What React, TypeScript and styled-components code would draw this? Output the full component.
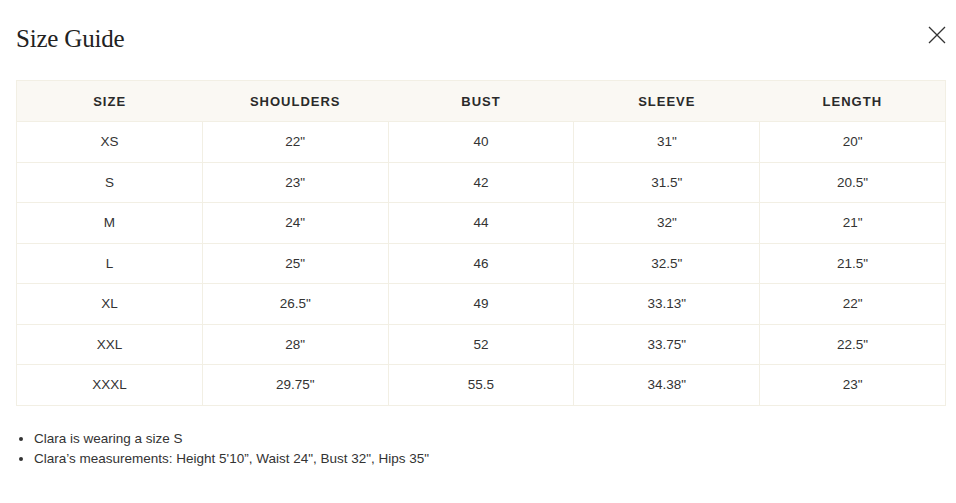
import React from 'react';
import styled, { createGlobalStyle } from 'styled-components';

const GlobalStyle = createGlobalStyle`
  body {
    margin: 0;
    background: #ffffff;
    font-family: "Liberation Sans", Arial, sans-serif;
    color: #333333;
  }
`;

const rows = [
  ['XS', '22"', '40', '31"', '20"'],
  ['S', '23"', '42', '31.5"', '20.5"'],
  ['M', '24"', '44', '32"', '21"'],
  ['L', '25"', '46', '32.5"', '21.5"'],
  ['XL', '26.5"', '49', '33.13"', '22"'],
  ['XXL', '28"', '52', '33.75"', '22.5"'],
  ['XXXL', '29.75"', '55.5', '34.38"', '23"'],
];

const headers = ['SIZE', 'SHOULDERS', 'BUST', 'SLEEVE', 'LENGTH'];

const App = () => {
  return (
    <>
      <GlobalStyle />
      <Modal>
        <Header>
          <Title>Size Guide</Title>
          <CloseButton aria-label="Close">
            <svg width="18" height="18" viewBox="0 0 18 18">
              <path d="M1 1L17 17M17 1L1 17" stroke="#333" strokeWidth="1.3" fill="none" />
            </svg>
          </CloseButton>
        </Header>
        <Table>
          <thead>
            <tr>
              {headers.map((h) => (
                <Th key={h}>{h}</Th>
              ))}
            </tr>
          </thead>
          <tbody>
            {rows.map((r) => (
              <tr key={r[0]}>
                {r.map((c, i) => (
                  <Td key={i}>{c}</Td>
                ))}
              </tr>
            ))}
          </tbody>
        </Table>
        <Notes>
          <li>Clara is wearing a size S</li>
          <li>Clara’s measurements: Height 5'10”, Waist 24", Bust 32", Hips 35"</li>
        </Notes>
      </Modal>
    </>
  );
};

export default App;

const Modal = styled.div`
  padding: 0 10px 0 16px;
  width: 956px;
  box-sizing: border-box;
`;

const Header = styled.div`
  display: flex;
  justify-content: space-between;
  align-items: flex-start;
  height: 80px;
`;

const Title = styled.h2`
  margin: 25px 0 0;
  font-family: "Liberation Serif", "Times New Roman", serif;
  font-weight: 400;
  font-size: 25px;
  letter-spacing: -0.2px;
  color: #222222;
`;

const CloseButton = styled.button`
  margin-top: 26px;
  background: none;
  border: none;
  padding: 0;
  cursor: pointer;
  line-height: 0;
`;

const Table = styled.table`
  width: 930px;
  border-collapse: collapse;
  table-layout: fixed;
  border: 1px solid #f2efe4;
`;

const Th = styled.th`
  background: #faf8f3;
  height: 40px;
  padding: 0;
  font-family: "Liberation Sans", Arial, sans-serif;
  font-size: 13px;
  font-weight: 700;
  letter-spacing: 1px;
  color: #2a2a2a;
  text-align: center;
`;

const Td = styled.td`
  height: 39.5px;
  padding: 0;
  border: 1px solid #f2efe4;
  text-align: center;
  font-size: 13.5px;
  color: #333333;
`;

const Notes = styled.ul`
  margin: 23px 0 0;
  padding-left: 18px;
  font-size: 13.5px;
  line-height: 20px;
  color: #333333;
`;
